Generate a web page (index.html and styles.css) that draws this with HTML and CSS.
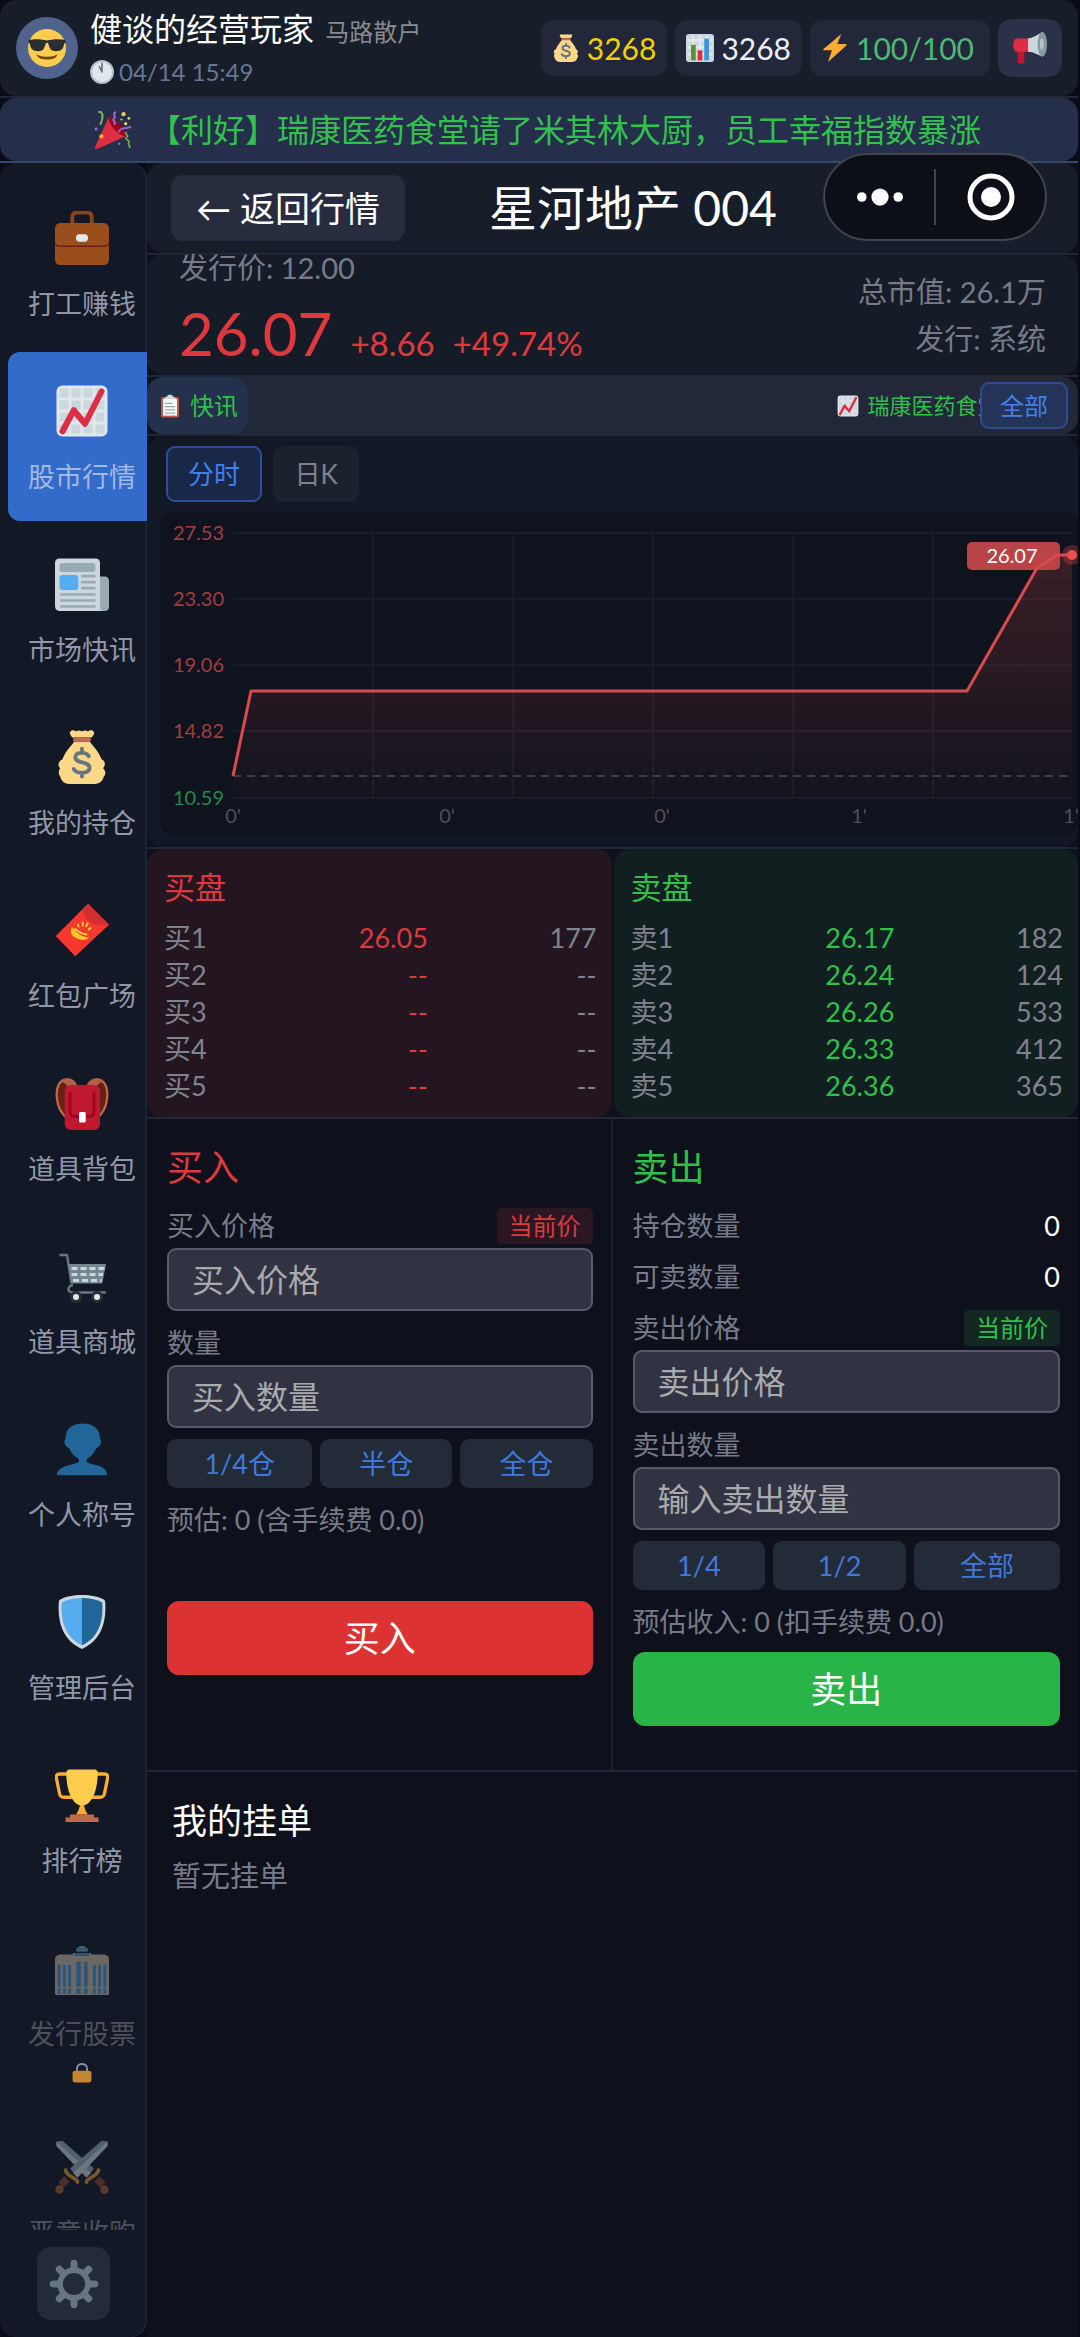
FILE: index.html
```html
<!DOCTYPE html>
<html lang="zh-CN">
<head>
<meta charset="utf-8">
<meta name="viewport" content="width=device-width">
<title>星河地产 004</title>
<link rel="stylesheet" href="styles.css">
</head>
<body>
<svg class="sprite" aria-hidden="true">
  <defs>
    <linearGradient id="area" x1="0" y1="0" x2="0" y2="1">
      <stop offset="0" stop-color="#e84a4a" stop-opacity=".2"/>
      <stop offset="1" stop-color="#e84a4a" stop-opacity=".02"/>
    </linearGradient>
    <symbol id="i-cool" viewBox="0 0 36 36">
      <circle cx="18" cy="18" r="18" fill="#ffcc4d"/>
      <path d="M.5 10.5C6 9 13 9.500 18 11c5-1.500 12-2 17.500-.5v2.500c-1 0-1.300 1-1.500 2-.6 4-2.500 6-7.500 6-4.500 0-6-2-7-6.500-.3-1-.8-1.500-1.500-1.500s-1.200.5-1.500 1.500C15.500 19 14 21 9.500 21 4.500 21 2.600 19 2 15c-.2-1-.5-2-1.500-2z" fill="#292f33"/>
      <path d="M9 25c2 4.500 16 4.500 18 0-5 2.500-13 2.500-18 0z" fill="#664500" stroke="#664500"/>
    </symbol>
    <symbol id="i-clock" viewBox="0 0 36 36">
      <circle cx="18" cy="18" r="16.500" fill="#e1e8ed" stroke="#b4bfc8" stroke-width="3"/>
      <path d="M18 18V5M18 18l-4-8" stroke="#66757f" stroke-width="2.500" stroke-linecap="round"/>
    </symbol>
    <symbol id="i-money" viewBox="0 0 36 36">
      <path d="M10 1.500C11-.5 13 .2 14 1c1-1 3-1 4 0 1-1 3-1 4 0 1-.8 3-1.500 4 .5.5 1-.5 2-1.500 3.500h-13C10.500 3.500 9.500 2.500 10 1.500z" fill="#fdd888"/>
      <path d="M31 19.500C29 14 25 10.500 23 7.500H13C11 10.500 7 14 5 19.500c-3.500 1.500-3 5-1.500 6-1.500 2-1 4.500 0 5.500.5 3 3 5 6 5h17c3 0 5.500-2 6-5 1.500-1 1.500-4-.5-5.500 2-2 1.500-5-1-6z" fill="#fdd888"/>
      <rect x="12" y="5" width="12" height="3" rx="1.500" fill="#bf6952"/>
      <path d="M22.500 17.500c-1-2.800-9-3.500-9 .7 0 4.300 9.500 2.500 9.500 7 0 4.500-9 4-10.500.8M18 12.500v2.500M18 28.500v2.500" fill="none" stroke="#67757f" stroke-width="2.600" stroke-linecap="round"/>
    </symbol>
    <symbol id="i-bars" viewBox="0 0 36 36">
      <rect width="36" height="36" rx="4" fill="#ccd6dd"/>
      <path d="M2 8h32M2 17h32M2 26h32M9 2v32M18 2v32M27 2v32" stroke="#e1e8ed" stroke-width="3"/>
      <path d="M6.500 14h6v20h-6z" fill="#5c913b"/><path d="M15 21h6v13h-6z" fill="#dd2e44"/><path d="M23.500 6h6v28h-6z" fill="#3b94d9"/>
    </symbol>
    <symbol id="i-bolt" viewBox="0 0 36 36">
      <path d="M26 0 3 19.500c-.5.5 0 1.500 1 1.500h10L9 36 33 14.500c.5-.5 0-1.500-1-1.500H21z" fill="#ffac33"/>
    </symbol>
    <symbol id="i-mega" viewBox="0 0 36 36">
      <path d="M5 18h7v15c0 2-7 2-7 0z" fill="#be1931"/>
      <path d="M4 8h14v14H4c-5 0-5-14 0-14z" fill="#dd2e44"/>
      <path d="M16 8C22 7 27 3 31 1v26c-4-1-9-5-15-5z" fill="#ccd6dd"/>
      <ellipse cx="31" cy="14" rx="5" ry="13" fill="#8899a6"/><ellipse cx="30.500" cy="14" rx="2" ry="6" fill="#b8c5ce"/>
    </symbol>
    <symbol id="i-party" viewBox="0 0 36 36">
      <path d="M14 6 1 34c-1 2 1 2.500 2.500 1.800L30 24z" fill="#dd2e44"/>
      <path d="M14 6c-1 6 8 17 16 18 2-5-11-20-16-18z" fill="#a0041e"/>
      <circle cx="7" cy="24" r="2" fill="#ffac33"/>
      <path d="M4 1c5-1 5 5 2 12" fill="none" stroke="#77b255" stroke-width="2"/>
      <path d="M21 1c-5 2 1 4-2 6s3 3 0 6M23 20c4-6 5-2 12-5" fill="none" stroke="#9266cc" stroke-width="2"/>
      <path d="M31 20c-3 2 3 3 0 5s4 3 2 5 3 3 0 5" fill="none" stroke="#77b255" stroke-width="1.500"/>
      <g fill="#ffcc4d"><circle cx="28" cy="3" r="2"/><circle cx="33" cy="7" r="1.300"/><circle cx="26" cy="8" r="1"/><circle cx="30" cy="12" r="1.500"/></g><circle cx="2" cy="17" r="1.500" fill="#9266cc"/><circle cx="24" cy="31" r="1" fill="#77b255"/>
    </symbol>
    <symbol id="i-case" viewBox="0 0 36 36">
      <path d="M11.500 9V4.500c0-2 1-3.500 3-3.500h7c2 0 3 1.500 3 3.500V9" fill="none" stroke="#8a4516" stroke-width="2.600"/>
      <rect y="8" width="36" height="28" rx="3.500" fill="#9a4e1c"/>
      <path d="M0 19.500c0 2 1 3.500 3.500 3.500h29c2.500 0 3.500-1.500 3.500-3.500v1.500c0 2-1 3-3.500 3h-29c-2.500 0-3.500-1-3.500-3z" fill="#662113"/>
      <rect x="14" y="15.500" width="8" height="5" rx="2.300" fill="#e1e8ed"/>
    </symbol>
    <symbol id="i-chart" viewBox="0 0 36 36">
      <rect x="1" y="1" width="34" height="34" rx="4" fill="#e1e8ed"/>
      <path d="M3 3h6v6H3zM11 3h6v6h-6zM19 3h6v6h-6zM27 3h6v6h-6zM3 11h6v6H3zM11 11h6v6h-6zM19 11h6v6h-6zM27 11h6v6h-6zM3 19h6v6H3zM11 19h6v6h-6zM19 19h6v6h-6zM27 19h6v6h-6zM3 27h6v6H3zM11 27h6v6h-6zM19 27h6v6h-6zM27 27h6v6h-6z" fill="#ccd6dd"/>
      <path d="m5 31.500 7.500-14L20 26.500 31 5" fill="none" stroke="#dd2e44" stroke-width="4" stroke-linejoin="round" stroke-linecap="round"/>
    </symbol>
    <symbol id="i-news" viewBox="0 0 36 36">
      <path d="M28 13h5c2 0 3 1 3 3v17c0 2-1 3-3 3h-6z" fill="#99aab5"/>
      <path d="M3 1h24c2 0 3 1 3 3v29c0 1.500.5 3 2 3H4c-3 0-4-1-4-4V4c0-2 1-3 3-3z" fill="#ccd6dd"/>
      <rect x="3" y="4" width="24" height="6" rx="2" fill="#99aab5"/><rect x="3" y="12" width="12.500" height="10" rx="2" fill="#55acee"/>
      <path d="M17.500 12.800H27M17.500 16.800H27M17.500 20.800H27M3.500 25H27M3.500 29H27M3.500 33H27" stroke="#99aab5" stroke-width="1.800"/>
    </symbol>
    <symbol id="i-red" viewBox="0 0 36 36">
      <path d="M22 .5 36 14.500 13.500 35.500.5 22z" fill="#f7382f"/>
      <path d="M22 .5 36 14.500C28 17 17 11 19 3.300z" fill="#d2302e"/>
      <path d="M11.500 16c3 4.500 6.500 6.500 11 7-1.500 3-9 1-11-1.500-1.200-1.500-1.200-4 0-5.500z" fill="#ffc928"/>
      <path d="M13 17c3 2.500 5 4 8.500 4M15 14l1 2M18.500 12.500v3M22 13l-1.500 3M24 16.500l-2 1.500" stroke="#ffd43f" fill="none" stroke-width="1.200"/>
    </symbol>
    <symbol id="i-bag" viewBox="0 0 36 36">
      <path d="M8 28C0 22-1 7 5 3c4-2 8 0 9 4M28 28c8-6 9-21 3-25-4-2-8 0-9 4" fill="#662113" stroke="#c1694f" stroke-width="1.500"/>
      <path d="M4 3c4-3 10-1 11 4H9zM32 3c-4-3-10-1-11 4h6z" fill="#b55f45"/>
      <rect x="6.500" y="6" width="23.500" height="30" rx="4" fill="#be1931"/>
      <path d="M10 11v12c0 3 1 4 3 4h10c2 0 3-1 3-4V11" fill="none" stroke="#a0041e" stroke-width="2"/>
      <rect x="16" y="24" width="4.500" height="7" rx="1" fill="#fff"/>
    </symbol>
    <symbol id="i-cart" viewBox="0 0 36 36">
      <path d="M3 4h5l3 19M34 29H12c-4 0-4-4 0-5" fill="none" stroke="#66757f" stroke-width="1.600"/>
      <path d="M9 10h25l-2.500 13H11z" fill="#768791"/>
      <path d="M11 13h22M11 17h21M12 21h19" stroke="#ccd6dd" stroke-width="2" stroke-dasharray="4 2"/>
      <g fill="#e1e8ed" stroke="#292f33" stroke-width="2"><circle cx="14" cy="32" r="3"/><circle cx="28" cy="32" r="3"/></g>
    </symbol>
    <symbol id="i-user" viewBox="0 0 36 36">
      <path d="M1.500 35.500c-1-4 5-6.500 11-7.500 3-.6 4.500-2 3-3.500-2.500-1.500-5-4-6-7-3-1-4-4.500-2.500-6.500C7 4.500 11.500 1 18.500 1S30 4.500 30 11c1.500 2 .5 5.500-2.500 6.500-1 3-3.500 5.500-6 7-1.500 1.500 0 2.900 3 3.500 6 1 11 3.500 10 7.500z" fill="#269"/>
    </symbol>
    <symbol id="i-shield" viewBox="0 0 36 36">
      <path d="M18 0c6 0 11 1 14.500 3 .7.400 1 1 1 2C34.500 21 29 31 18 36 7 31 1.500 21 2.500 5c0-1 .3-1.600 1-2C7 1 12 0 18 0z" fill="#ccd6dd"/>
      <path d="M18 2v31.500C8.500 29 3.500 20 4.500 5 8 3 12.500 2 18 2z" fill="#55acee"/><path d="M18 2v31.500C27.500 29 32.500 20 31.500 5 28 3 23.500 2 18 2z" fill="#269"/>
    </symbol>
    <symbol id="i-cup" viewBox="0 0 36 36">
      <path d="M9 4H3C1 4 .8 5 1 7l2 10c.4 2 1 2.500 3 2.500h6M27 4h6c2 0 2.200 1 2 3l-2 10c-.4 2-1 2.500-3 2.500h-6" fill="none" stroke="#ffac33" stroke-width="2.200"/>
      <path d="M14 31c3-4 3-8 2-10h4c-1 2-1 6 2 10z" fill="#ffac33"/>
      <path d="M7.500 3c0-1 1-2 2-2h17c1 0 2 1 2 2 0 12-4 22-10.500 22S7.500 15 7.500 3z" fill="#ffcc4d"/>
      <path d="M10 31h16v2h3v3H7v-3h3z" fill="#c1694f"/>
    </symbol>
    <symbol id="i-bank" viewBox="0 0 36 36">
      <path d="M0 12c0-2 2-3 4-3h8v27H1c-1 0-1-1-1-1zM36 12c0-2-2-3-4-3h-8v27h11c1 0 1-1 1-1zM12 8h12v28H12z" fill="#b5a899"/>
      <path d="M14 7c0-5 8-5 8 0z" fill="#8899a6"/><path d="M13 8h10v2H13zM14 5h8v1h-8z" fill="#3b88c3"/>
      <path d="M2 16h1.500v19H2zM5.500 16h1.500v19H5.500zM9 16h1.500v19H9zM14.500 14h2.500v21h-2.500zM19.500 14h2v21h-2zM25.500 16h1.500v19h-1.500zM29 16h1.500v19H29zM32.500 16H34v19h-1.500z" fill="#3b88c3" stroke="#3b88c3" stroke-width=".4"/>
      <path d="M0 31h36" stroke="#b5a899"/>
    </symbol>
    <symbol id="i-lock" viewBox="0 0 36 36">
      <path d="M9 17V10c0-11 18-11 18 0v7" fill="none" stroke="#aab8c2" stroke-width="3.500"/>
      <rect x="1" y="14" width="34" height="21" rx="5" fill="#ffac33"/>
    </symbol>
    <symbol id="i-swords" viewBox="0 0 36 36">
      <g id="sword"><path d="M1 1l4-.5L26 19l-5 6L1 4z" fill="#8899a6"/><path d="M1 1l23 21-3 3L1 4z" fill="#b8c4cd"/><path d="M28 26l4 4" stroke="#7c4230" stroke-width="5"/><path d="M21 28c0-3 7-3 8-8" fill="none" stroke="#cc8f2e" stroke-width="2.500" stroke-linecap="round"/><circle cx="33" cy="33" r="2.800" fill="#9b552f"/></g>
      <use href="#sword" transform="matrix(-1 0 0 1 36 0)"/>
    </symbol>
    <symbol id="i-gear" viewBox="0 0 36 36">
      <g stroke="#66757f" stroke-width="5" stroke-linecap="round"><path d="M18 3v30M3 18h30M7.400 7.400l21.200 21.200M28.600 7.400 7.400 28.600"/></g>
      <circle cx="18" cy="18" r="12" fill="#66757f"/><circle cx="18" cy="18" r="8" fill="#232a3a"/>
    </symbol>
    <symbol id="i-clip" viewBox="0 0 28 36">
      <rect y="4" width="28" height="32" rx="3" fill="#c1543f"/><path d="M3 7h22v26H3z" fill="#f5f8fa"/>
      <path d="M6 14h12M6 19h16M6 24h16M6 29h16" stroke="#99aab5" stroke-width="2"/><path d="M5 7c0-3 5-3 5-5 1-2 7-2 8 0 0 2 5 2 5 5z" fill="#ccd6dd"/>
    </symbol>
  </defs>
</svg>

<div class="app">
  <header class="line">
    <div class="top panel">
      <div class="avatar"><svg><use href="#i-cool"/></svg></div>
      <div class="who">
        <div class="who-name">健谈的经营玩家 <small>马路散户</small></div>
        <div class="who-time"><svg><use href="#i-clock"/></svg><time>04/14 15:49</time></div>
      </div>
      <div class="stat gold"><svg><use href="#i-money"/></svg>3268</div>
      <div class="stat"><svg><use href="#i-bars"/></svg>3268</div>
      <div class="stat energy"><svg><use href="#i-bolt"/></svg>100/100</div>
      <button class="notice" type="button" aria-label="公告"><svg><use href="#i-mega"/></svg></button>
    </div>
  </header>
  <div class="line banner-line">
    <div class="banner panel"><svg><use href="#i-party"/></svg><span>【利好】瑞康医药食堂请了米其林大厨，员工幸福指数暴涨</span></div>
  </div>

  <div class="body">
    <aside class="side panel">
      <nav>
        <a href="#"><svg><use href="#i-case"/></svg><span>打工赚钱</span></a>
        <a href="#" class="on"><svg><use href="#i-chart"/></svg><span>股市行情</span></a>
        <a href="#"><svg><use href="#i-news"/></svg><span>市场快讯</span></a>
        <a href="#"><svg><use href="#i-money"/></svg><span>我的持仓</span></a>
        <a href="#"><svg><use href="#i-red"/></svg><span>红包广场</span></a>
        <a href="#"><svg><use href="#i-bag"/></svg><span>道具背包</span></a>
        <a href="#"><svg><use href="#i-cart"/></svg><span>道具商城</span></a>
        <a href="#"><svg><use href="#i-user"/></svg><span>个人称号</span></a>
        <a href="#"><svg><use href="#i-shield"/></svg><span>管理后台</span></a>
        <a href="#"><svg><use href="#i-cup"/></svg><span>排行榜</span></a>
        <a href="#" class="off"><svg><use href="#i-bank"/></svg><span>发行股票</span><svg class="lock"><use href="#i-lock"/></svg></a>
        <a href="#" class="off"><svg><use href="#i-swords"/></svg><span>恶意收购</span></a>
      </nav>
      <button class="gear" type="button" aria-label="设置"><svg><use href="#i-gear"/></svg></button>
    </aside>

    <main>
      <div class="line"><div class="head panel">
        <button class="back" type="button">← 返回行情</button>
        <h1>星河地产 004</h1>
      </div></div>

      <div class="line"><section class="quote panel">
        <div>
          <p class="issue">发行价: 12.00</p>
          <p class="price"><b>26.07</b><span>+8.66</span><span>+49.74%</span></p>
        </div>
        <div class="meta"><p>总市值: 26.1万</p><p>发行: 系统</p></div>
      </section></div>

      <div class="line"><div class="flash panel">
        <div class="flash-tag"><svg><use href="#i-clip"/></svg>快讯</div>
        <div class="flash-run"><svg><use href="#i-chart"/></svg>瑞康医药食堂</div>
        <button type="button">全部</button>
      </div></div>

      <div class="line"><section class="trend panel">
        <div class="tabs"><button type="button" class="on">分时</button><button type="button">日K</button></div>
        <svg class="plot" viewBox="0 0 918 325" role="img" aria-label="分时走势">
          <path class="grid" d="M73 22H912M73 88H912M73 154H912M73 220H912M73 287H912M213 22V287M353 22V287M493 22V287M633 22V287M773 22V287"/>
          <path d="M73 265 91 180H807L877 57 897 44H912V287H73z" fill="url(#area)"/>
          <path class="base" d="M73 265H912"/>
          <rect x="807" y="31" width="93" height="28" rx="5" fill="#b94347"/>
          <path class="curve" d="M73 265 91 180H807L877 57 897 44H912"/>
          <circle cx="912" cy="44" r="10" fill="#e84a4a" opacity=".3"/><circle cx="912" cy="44" r="5" fill="#ee5050"/>
          <text class="tip" x="852" y="52">26.07</text>
          <g class="ylab"><text x="64" y="29">27.53</text><text x="64" y="95">23.30</text><text x="64" y="161">19.06</text><text x="64" y="227">14.82</text><text class="down" x="64" y="294">10.59</text></g>
          <g class="xlab"><text x="73" y="312">0'</text><text x="287" y="312">0'</text><text x="502" y="312">0'</text><text x="699" y="312">1'</text><text x="911" y="312">1'</text></g>
        </svg>
      </section></div>

      <div class="line"><div class="book">
        <section class="bid panel"><h2>买盘</h2>
          <table>
            <tr><th>买1</th><td>26.05</td><td>177</td></tr>
            <tr><th>买2</th><td>--</td><td>--</td></tr>
            <tr><th>买3</th><td>--</td><td>--</td></tr>
            <tr><th>买4</th><td>--</td><td>--</td></tr>
            <tr><th>买5</th><td>--</td><td>--</td></tr>
          </table></section>
        <section class="ask panel"><h2>卖盘</h2>
          <table>
            <tr><th>卖1</th><td>26.17</td><td>182</td></tr>
            <tr><th>卖2</th><td>26.24</td><td>124</td></tr>
            <tr><th>卖3</th><td>26.26</td><td>533</td></tr>
            <tr><th>卖4</th><td>26.33</td><td>412</td></tr>
            <tr><th>卖5</th><td>26.36</td><td>365</td></tr>
          </table></section>
      </div></div>

      <div class="line"><div class="trade">
        <form class="buy">
          <h2>买入</h2>
          <div class="row"><label for="bp">买入价格</label><button type="button" class="now">当前价</button></div>
          <input id="bp" type="text" placeholder="买入价格">
          <div class="row lower"><label for="bq">数量</label></div>
          <input id="bq" type="text" placeholder="买入数量">
          <div class="quick"><button type="button" class="wide">1/4仓</button><button type="button">半仓</button><button type="button">全仓</button></div>
          <p class="est">预估: 0 (含手续费 0.0)</p>
          <button type="button" class="go">买入</button>
        </form>
        <form class="sell">
          <h2>卖出</h2>
          <div class="row"><span>持仓数量</span><b>0</b></div>
          <div class="row next"><span>可卖数量</span><b>0</b></div>
          <div class="row next"><label for="sp">卖出价格</label><button type="button" class="now">当前价</button></div>
          <input id="sp" type="text" placeholder="卖出价格">
          <div class="row lower"><label for="sq">卖出数量</label></div>
          <input id="sq" type="text" placeholder="输入卖出数量">
          <div class="quick"><button type="button">1/4</button><button type="button">1/2</button><button type="button" class="wide">全部</button></div>
          <p class="est">预估收入: 0 (扣手续费 0.0)</p>
          <button type="button" class="go">卖出</button>
        </form>
      </div></div>

      <section class="orders">
        <h2>我的挂单</h2>
        <p>暂无挂单</p>
      </section>
    </main>
  </div>
</div>

<div class="capsule">
  <button type="button" aria-label="更多"><svg viewBox="0 0 48 48"><g fill="#fff"><circle cx="5" cy="24" r="5"/><circle cx="24" cy="24" r="9"/><circle cx="43" cy="24" r="5"/></g></svg></button>
  <button type="button" aria-label="关闭"><svg viewBox="0 0 48 48"><circle cx="24" cy="24" r="21" fill="none" stroke="#fff" stroke-width="5"/><circle cx="24" cy="24" r="10" fill="#fff"/></svg></button>
</div>
</body>
</html>
```
FILE: styles.css
```css
* { box-sizing: border-box; }
body {
  margin: 0;
  background: #090b16;
  color: #fff;
  font-family: Lato, "Noto Sans CJK SC", sans-serif;
  font-size: 27px;
}
h1, h2, p { margin: 0; font-weight: 400; }
b, th { font-weight: 400; }
svg { display: block; flex: none; }
button { margin: 0; padding: 0; border: 0; background: none; color: inherit; font: inherit; }
a { color: inherit; text-decoration: none; }
.sprite { position: absolute; width: 0; height: 0; }

.app { display: flex; flex-direction: column; height: 100vh; padding-right: 2px; overflow: hidden; }
.line { border-bottom: 2px solid #222738; }
.panel { border-radius: 16px; }

/* top bar */
.top { display: flex; align-items: center; gap: 8px; height: 96px; padding: 0 16px; background: #181d2a; }
.avatar { display: grid; place-items: center; flex: none; width: 62px; height: 62px; border-radius: 50%; background: #50638c; }
.avatar svg { width: 38px; height: 38px; }
.who { flex: 1; padding-left: 4px; white-space: nowrap; }
.who-name { font-size: 32px; line-height: 44px; }
.who-name small { margin-left: 3px; color: #888b90; font-size: 24px; }
.who-time { display: flex; align-items: center; gap: 5px; color: #687796; font-size: 24px; line-height: 36px; }
.who-time svg { width: 24px; height: 24px; }
.stat { display: flex; align-items: center; gap: 7px; height: 56px; padding: 0 11px; border-radius: 12px; background: #222739; font-size: 30px; color: #eceef8; }
.stat svg { width: 28px; height: 28px; }
.gold { color: #f5d000; }
.energy { color: #4cb876; padding-right: 16px; }
.notice { display: grid; place-items: center; width: 64px; height: 58px; border-radius: 14px; background: #2a3148; }
.notice svg { width: 38px; height: 34px; }

.banner-line { border-color: #37466c; }
.banner { display: flex; align-items: center; gap: 17px; height: 63px; padding-left: 94px; background: #252e4b; color: #30c24c; font-size: 32px; line-height: 44px; white-space: nowrap; }
.banner svg { width: 38px; height: 38px; }

/* side navigation */
.body { display: flex; flex: 1; min-height: 0; }
.side { display: flex; flex-direction: column; flex: none; width: 147px; background: #121825; box-shadow: inset -2px 0 #1d2337; }
nav { display: flex; flex-direction: column; gap: 4px; flex: 1; min-height: 0; padding: 16px 0 0 8px; overflow: hidden; }
nav a { display: flex; flex-direction: column; align-items: center; flex: none; padding: 32px 0 24px 9px; border-radius: 12px 0 0 12px; color: #9297a8; white-space: nowrap; }
nav svg { width: 54px; height: 54px; }
nav span { margin-top: 19px; line-height: 40px; }
nav .on { background: #336bca; color: #a3b8e2; }
nav .off { padding-bottom: 20px; color: #4d515b; }
nav .off svg { opacity: .55; }
nav .off .lock { width: 20px; height: 22px; margin-top: 8px; opacity: .75; }
.gear { display: grid; place-items: center; width: 73px; height: 73px; margin: 17px 37px; border-radius: 14px; background: #232a3a; }
.gear svg { width: 50px; height: 50px; }

/* stock heading */
main { flex: 1; min-width: 0; overflow: hidden; background: #0e101b; }
.head { display: flex; align-items: center; height: 90px; padding-left: 24px; background: #181d2a; }
.back { width: 234px; height: 66px; border-radius: 12px; background: #282c3f; font-size: 35px; line-height: 66px; }
.head h1 { margin-left: 84px; font-size: 48px; line-height: 64px; white-space: nowrap; }
.quote { display: flex; align-items: center; justify-content: space-between; height: 120px; padding: 0 32px; background: #161b28; color: #777b89; font-size: 29px; }
.issue { line-height: 42px; margin-bottom: 4px; }
.price { display: flex; align-items: baseline; gap: 18px; line-height: 80px; color: #e0393d; font-size: 33px; }
.price b { font-size: 60px; }
.meta { text-align: right; line-height: 47px; }

.flash { display: flex; align-items: center; height: 57px; padding-right: 10px; background: #222739; color: #2fc04a; font-size: 24px; line-height: 36px; }
.flash-tag { display: flex; align-items: center; gap: 11px; height: 57px; width: 101px; padding-left: 14px; border-radius: 16px; background: #25304c; white-space: nowrap; }
.flash-tag svg { width: 18px; height: 24px; }
.flash-run { display: flex; align-items: center; gap: 8px; flex: 1; min-width: 0; padding-left: 64%; overflow: hidden; font-size: 22px; white-space: nowrap; }
.flash-run svg { width: 22px; height: 22px; }
.flash button { flex: none; width: 88px; height: 47px; border: 2px solid #2f4c8e; border-radius: 9px; background: #243358; color: #4580ea; }

/* chart */
.trend { padding: 10px 0 11px 13px; background: #131826; }
.tabs { display: flex; gap: 11px; margin-bottom: 9px; padding-left: 6px; }
.tabs button { width: 86px; height: 56px; border-radius: 9px; background: #1c212e; color: #7d818d; font-size: 26px; line-height: 40px; }
.tabs .on { width: 96px; border: 2px solid #2b4f9e; background: #1a2848; color: #4080ee; }
.plot { width: 100%; border-radius: 14px; background: #0f131d; font-size: 20px; }
.grid { stroke: #181c27; stroke-width: 2; }
.base { stroke: #3b3d47; stroke-width: 2; stroke-dasharray: 8 6; }
.curve { fill: none; stroke: #d84a4c; stroke-width: 3; stroke-linejoin: round; }
.tip { fill: #fff; text-anchor: middle; }
.ylab { fill: #a33c43; text-anchor: end; }
.ylab .down { fill: #23884a; }
.xlab { fill: #4d515b; text-anchor: middle; }

/* order book */
.book { display: grid; grid-template-columns: 1fr 1fr; gap: 2px; }
.book section { padding: 18px 15px 13px 17px; }
.book h2 { margin-bottom: 12px; font-size: 31px; line-height: 40px; }
.bid { background: #231621; color: #de393d; }
.ask { background: #121f21; color: #2fc04a; }
.book table { width: 100%; border-collapse: collapse; table-layout: fixed; line-height: 37px; }
.book th { width: 22%; padding: 0; text-align: left; color: #80838f; }
.book td { padding: 0; text-align: right; }
.book td:last-child { color: #80838f; }

/* buy and sell forms */
.trade { display: grid; grid-template-columns: 1fr 1fr; }
.trade form { padding: 22px 18px 44px 20px; }
.buy { border-right: 2px solid #1b1f30; }
.trade h2 { margin-bottom: 15px; font-size: 36px; line-height: 52px; }
.row { display: flex; align-items: center; justify-content: space-between; height: 36px; margin-bottom: 4px; color: #777b89; line-height: 36px; }
.next { margin-top: 15px; }
.row:has(+ .next) { margin-bottom: 0; }
.lower { margin-top: 14px; }
.row b { color: #fff; }
.now { width: 96px; height: 36px; border-radius: 5px; font-size: 24px; line-height: 36px; }
input { display: block; width: 100%; height: 63px; padding: 0 23px; border: 2px solid #575a69; border-radius: 9px; background: #313343; color: #fff; font: inherit; font-size: 32px; }
input::placeholder { color: #a9abad; opacity: 1; }
.quick { display: flex; gap: 8px; margin-top: 11px; }
.quick button { flex: 10; height: 49px; border-radius: 9px; background: #232a38; color: #4079de; line-height: 49px; }
.quick .wide { flex: 11; }
.est { margin-top: 14px; line-height: 36px; color: #777b89; white-space: nowrap; }
.go { width: 100%; height: 74px; margin-top: 12px; border-radius: 12px; font-size: 36px; line-height: 74px; }
.buy h2, .buy .now { color: #de393d; }
.buy .now { background: #2b1721; }
.buy .go { margin-top: 63px; background: #dc3232; }
.sell h2, .sell .now { color: #2fc04a; }
.sell .now { background: #132823; }
.sell .go { background: #28b446; }

.orders { padding: 24px 25px; }
.orders h2 { font-size: 35px; line-height: 48px; }
.orders p { margin-top: 12px; color: #777b89; font-size: 29px; line-height: 40px; }

/* floating host menu */
.capsule { position: absolute; top: 153px; right: 33px; display: flex; align-items: center; width: 224px; height: 88px; border: 2px solid #41444d; border-radius: 44px; background: #0c0f17; }
.capsule button { display: grid; place-items: center; flex: 1; height: 56px; }
.capsule button + button { border-left: 2px solid #41444d; }
.capsule svg { width: 48px; height: 48px; }
.capsule button:first-child svg { width: 46px; }
```
